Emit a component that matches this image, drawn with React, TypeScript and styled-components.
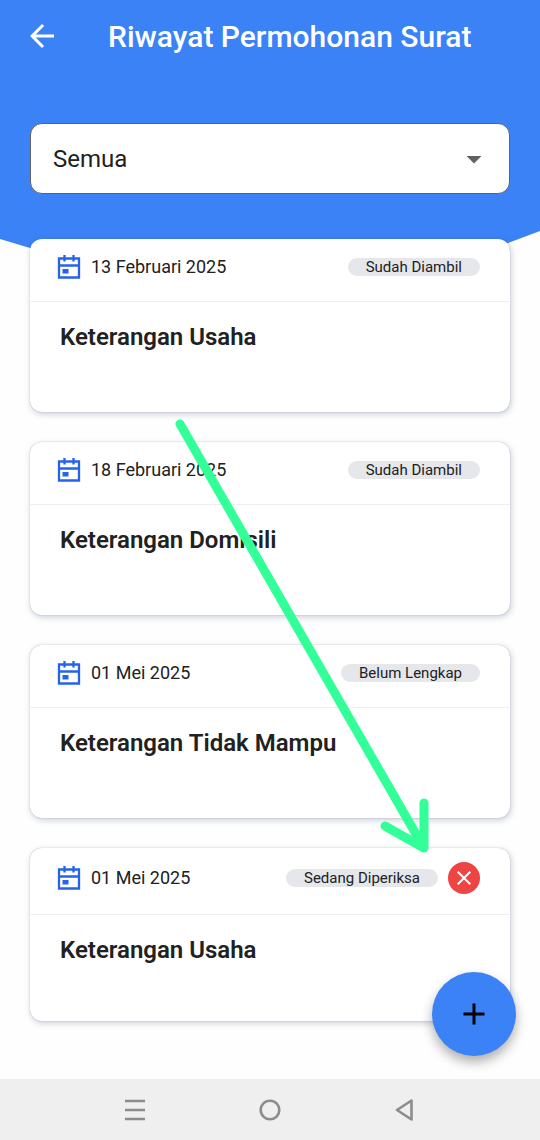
import React, { useState } from 'react';
import styled, { createGlobalStyle } from 'styled-components';
import { MdAdd, MdArrowBack, MdArrowDropDown, MdClose } from 'react-icons/md';

const GlobalStyle = createGlobalStyle`
  *, *::before, *::after { box-sizing: border-box; }
  body {
    margin: 0;
    background: #fefefe;
    color: #212121;
    font-family: Roboto, "Noto Sans", sans-serif;
  }
  button, select { font: inherit; color: inherit; }
`;

const Page = styled.div`
  position: relative;
  display: flex;
  flex-direction: column;
  min-height: 100vh;
`;

const Hero = styled.header`
  display: flex;
  flex-direction: column;
  gap: 51px;
  padding-bottom: 14px;
  background: #3b82f6;
`;

const TitleBar = styled.div`
  display: flex;
  align-items: center;
  gap: 48px;
  height: 72px;
  padding: 0 24px;
`;

const BackButton = styled.button`
  display: flex;
  padding: 0;
  border: 0;
  background: none;
  color: #fff;
  cursor: pointer;
`;

const Title = styled.h1`
  margin: 0;
  padding-top: 2px;
  color: #fff;
  font-size: 30px;
  font-weight: 500;
  line-height: 36px;
`;

const Filter = styled.div`
  position: relative;
  margin: 0 30px;
`;

const FilterSelect = styled.select`
  appearance: none;
  width: 100%;
  height: 71px;
  padding: 0 60px 0 22px;
  border: 1px solid #616161;
  border-radius: 12px;
  background: #fff;
  font-size: 24px;
`;

const FilterArrow = styled(MdArrowDropDown)`
  position: absolute;
  top: 18px;
  right: 18px;
  color: #616161;
  pointer-events: none;
`;

const Wave = styled.svg`
  display: block;
  width: 100%;
  height: 60px;
`;

const List = styled.main`
  display: flex;
  flex: 1;
  flex-direction: column;
  gap: 30px;
  margin-top: -29px;
  padding: 0 30px 58px;
`;

const Card = styled.article`
  min-height: 173px;
  border-radius: 12px;
  background: #fff;
  box-shadow: 0 0 1px rgba(71, 85, 105, 0.5), 1px 2px 6px rgba(71, 85, 125, 0.3);
`;

const CardHeader = styled.div`
  display: flex;
  align-items: center;
  gap: 10px;
  padding: 14px 30px 20px 26px;
  border-bottom: 1px solid #eeeff1;
`;

const DateLabel = styled.time`
  flex: 1;
  font-size: 18px;
  line-height: 28px;
`;

const Status = styled.span`
  padding: 0 18px;
  border-radius: 9px;
  background: #e5e7eb;
  font-size: 15px;
  line-height: 18px;
`;

const CancelButton = styled.button`
  display: flex;
  align-items: center;
  justify-content: center;
  width: 32px;
  height: 32px;
  padding: 0;
  border: 0;
  border-radius: 50%;
  background: #ef4444;
  color: #fff;
  cursor: pointer;
`;

const CardTitle = styled.h2`
  margin: 0;
  padding: 19px 30px;
  font-size: 24px;
  font-weight: 600;
  line-height: 32px;
`;

const AddButton = styled.button`
  position: absolute;
  right: 24px;
  bottom: 84px;
  display: flex;
  align-items: center;
  justify-content: center;
  width: 84px;
  height: 84px;
  padding: 0;
  border: 0;
  border-radius: 50%;
  background: #3b82f6;
  color: #000;
  box-shadow: 0 6px 12px rgba(0, 0, 0, 0.32);
  cursor: pointer;
`;

const Pointer = styled.svg`
  position: absolute;
  top: 414px;
  left: 170px;
  pointer-events: none;
`;

const SystemBar = styled.nav`
  display: grid;
  grid-template-columns: repeat(3, 1fr);
  height: 61px;
  padding: 0 12.5%;
  background: #efefef;
`;

const SystemButton = styled.button`
  display: flex;
  align-items: center;
  justify-content: center;
  padding: 0;
  border: 0;
  background: none;
  color: #8c8c8c;
  cursor: pointer;
`;

const CalendarIcon = () => (
  <svg width="25" height="26" viewBox="0 0 25 26" fill="none" stroke="#2563eb" strokeWidth="2.3" aria-hidden="true">
    <path d="M3 4.500h20v19H3zM3 11.500h20M8.500 1v6.500M17.500 1v6.500" />
    <path d="M6.500 15h6v4.500h-6z" fill="#2563eb" stroke="none" />
  </svg>
);

interface Request {
  date: string;
  iso: string;
  status: string;
  title: string;
  cancellable?: boolean;
}

const requests: Request[] = [
  { date: '13 Februari 2025', iso: '2025-02-13', status: 'Sudah Diambil', title: 'Keterangan Usaha' },
  { date: '18 Februari 2025', iso: '2025-02-18', status: 'Sudah Diambil', title: 'Keterangan Domisili' },
  { date: '01 Mei 2025', iso: '2025-05-01', status: 'Belum Lengkap', title: 'Keterangan Tidak Mampu' },
  { date: '01 Mei 2025', iso: '2025-05-01', status: 'Sedang Diperiksa', title: 'Keterangan Usaha', cancellable: true },
];

const filters = ['Semua', 'Sudah Diambil', 'Belum Lengkap', 'Sedang Diperiksa'];

export default function App() {
  const [filter, setFilter] = useState('Semua');
  const shown = requests.filter((r) => filter === 'Semua' || r.status === filter);

  return (
    <>
      <GlobalStyle />
      <Page>
        <Hero>
          <TitleBar>
            <BackButton type="button" aria-label="Kembali">
              <MdArrowBack size={36} />
            </BackButton>
            <Title>Riwayat Permohonan Surat</Title>
          </TitleBar>
          <Filter>
            <FilterSelect aria-label="Status surat" value={filter} onChange={(e) => setFilter(e.target.value)}>
              {filters.map((name) => (
                <option key={name}>{name}</option>
              ))}
            </FilterSelect>
            <FilterArrow size={36} />
          </Filter>
        </Hero>
        <Wave viewBox="0 0 540 60" preserveAspectRatio="none" aria-hidden="true">
          <path d="M0 0H540V23L508 35Q400 60 270 60Q130 60 30 40L0 31Z" fill="#3b82f6" />
        </Wave>
        <List>
          {shown.map((r) => (
            <Card key={r.iso + r.title}>
              <CardHeader>
                <CalendarIcon />
                <DateLabel dateTime={r.iso}>{r.date}</DateLabel>
                <Status>{r.status}</Status>
                {r.cancellable && (
                  <CancelButton type="button" aria-label="Batalkan">
                    <MdClose size={24} />
                  </CancelButton>
                )}
              </CardHeader>
              <CardTitle>{r.title}</CardTitle>
            </Card>
          ))}
        </List>
        <Pointer width="270" height="450" viewBox="170 414 270 450" fill="none" stroke="#33ff99" strokeWidth="9" strokeLinecap="round" strokeLinejoin="round" aria-hidden="true">
          <path d="M180 424L424 848M424 803V848L385 826" />
        </Pointer>
        <AddButton type="button" aria-label="Tambah permohonan">
          <MdAdd size={36} />
        </AddButton>
        <SystemBar aria-label="Navigasi sistem">
          <SystemButton type="button" aria-label="Menu">
            <svg width="24" height="24" viewBox="0 0 24 24" fill="none" stroke="currentColor" strokeWidth="2.6">
              <path d="M2 3h20M2 12h20M2 21h20" />
            </svg>
          </SystemButton>
          <SystemButton type="button" aria-label="Beranda">
            <svg width="24" height="24" viewBox="0 0 24 24" fill="none" stroke="currentColor" strokeWidth="2.6">
              <circle cx="12" cy="12" r="9.300" />
            </svg>
          </SystemButton>
          <SystemButton type="button" aria-label="Sebelumnya">
            <svg width="24" height="24" viewBox="0 0 24 24" fill="none" stroke="currentColor" strokeWidth="2.6" strokeLinejoin="round">
              <path d="M18.500 2.500v19L4 12z" />
            </svg>
          </SystemButton>
        </SystemBar>
      </Page>
    </>
  );
}
